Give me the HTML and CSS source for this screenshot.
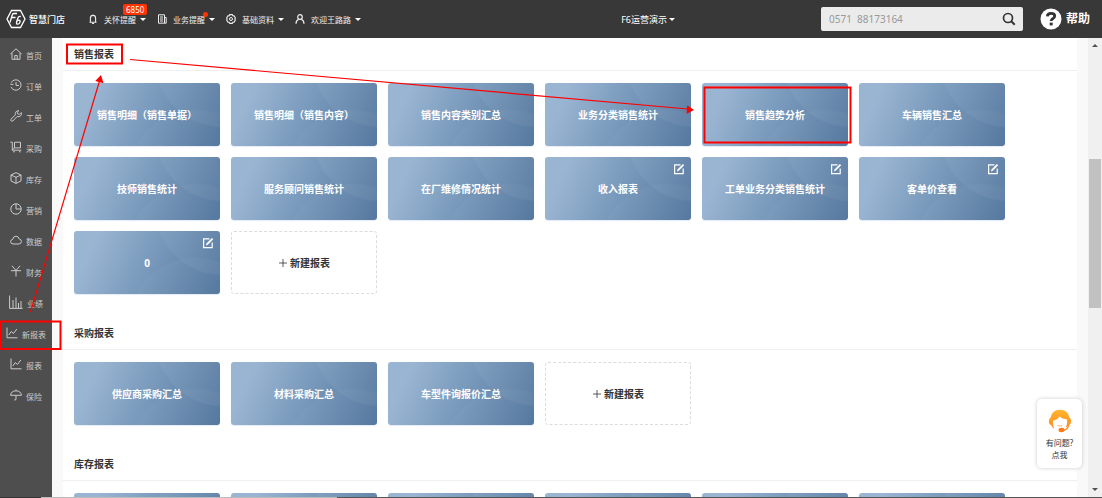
FILE: index.html
```html
<!DOCTYPE html>
<html lang="zh-CN">
<head>
<meta charset="utf-8">
<meta name="viewport" content="width=device-width, initial-scale=1">
<title>智慧门店</title>
<link rel="stylesheet" href="styles.css">
</head>
<body>
<svg class="sprite" aria-hidden="true">
  <symbol id="edit" viewBox="0 0 12 12"><path d="M7.500 1.800H1.600v8.900h8.600V5.500" fill="none" stroke="currentColor" stroke-width="1.200"/><path d="M4 8.400l.5-2L9.900.9l1.300 1.300-5.400 5.500z" fill="currentColor"/></symbol>
  <symbol id="plus" viewBox="0 0 10 10"><path d="M5 1v8M1 5h8" fill="none" stroke="currentColor" stroke-width=".8"/></symbol>
  <symbol id="chart" viewBox="0 0 12 12"><path d="M1 .5v10.300h10.500M2.800 8l2.400-3.400 2.300 1.800L10.800 2" fill="none" stroke="currentColor"/></symbol>
</svg>

<header class="topbar">
  <a class="brand" href="#">
    <svg class="brand-mark" viewBox="0 0 20 20"><path d="M5.500 1.500h9L19 10l-4.500 8.500h-9L1 10z" fill="none" stroke="#fff" stroke-width="1.300"/><path d="M11 4.500H7.800Q6.600 4.500 6.200 6L4 13.500M5.500 8.500h4M14.800 7.500q-2.300-.6-3 1.700L10.600 13q-.5 2.200 1.200 2.200 1.700 0 2.200-2 .5-2-1.200-2-1 0-1.800 1" fill="none" stroke="#fff" stroke-width="1.300"/></svg>
    <span>智慧门店</span>
  </a>
  <nav class="menu">
    <button class="menu-item" type="button">
      <svg class="menu-icon" viewBox="0 0 10 10"><path d="M1.500 8.200h7M2.400 8V4.200a2.600 2.800 0 0 1 5.200 0V8M5 .4v1M4 9.600h2" fill="none" stroke="currentColor" stroke-width="1.100"/></svg>
      <span>关怀提醒</span><i class="caret"></i><span class="count">6850</span>
    </button>
    <button class="menu-item" type="button">
      <svg class="menu-icon" viewBox="0 0 10 10"><path d="M1.500.8h6v8.400h-6zM7.500 3.500h1.700v5.700H7.500M3 3h3M3 5h3M3 7h3" fill="none" stroke="currentColor"/></svg>
      <span>业务提醒</span><i class="caret"></i><span class="dot"></span>
    </button>
    <button class="menu-item" type="button">
      <svg class="menu-icon" viewBox="0 0 10 10"><path d="M3.700.6h2.600l.5 1.200 1.300.1 1.300 2.100-.6 1 .6 1-1.300 2.100-1.300.1-.5 1.200H3.700l-.5-1.200-1.300-.1L.6 6l.6-1-.6-1 1.300-2.100 1.300-.1z" fill="none" stroke="currentColor" stroke-width="1.100"/><circle cx="5" cy="5" r="1.500" fill="none" stroke="currentColor"/></svg>
      <span>基础资料</span><i class="caret"></i>
    </button>
    <button class="menu-item" type="button">
      <svg class="menu-icon" viewBox="0 0 10 10"><circle cx="5" cy="3" r="2.300" fill="none" stroke="currentColor" stroke-width="1.200"/><path d="M1 9.800q0-3.600 2.800-4.600M9 9.800Q9 6.200 6.200 5.200" fill="none" stroke="currentColor" stroke-width="1.200"/></svg>
      <span>欢迎王路路</span><i class="caret"></i>
    </button>
  </nav>
  <button class="shop" type="button"><span>F6运营演示</span><i class="caret"></i></button>
  <form class="search">
    <input class="search-input" type="text" value="0571  88173164" aria-label="搜索">
    <button class="search-button" type="button" aria-label="搜索"><svg viewBox="0 0 14 14"><circle cx="6" cy="6" r="4.500" fill="none" stroke="#333" stroke-width="1.700"/><path d="M9.300 9.300l3.400 3.500" stroke="#333" stroke-width="2"/></svg></button>
  </form>
  <a class="help" href="#">
    <svg class="help-mark" viewBox="0 0 22 22"><circle cx="11" cy="11" r="10.500" fill="#fff"/><path d="M7.300 8.300q.3-3 3.800-3 3.600 0 3.600 2.700 0 1.500-1.700 2.500-1.800 1-1.800 2.500" fill="none" stroke="#333" stroke-width="2.800"/><path d="M9.700 14.600h3v2.800h-3z" fill="#333"/></svg>
    <span>帮助</span>
  </a>
</header>

<div class="shell">
  <nav class="sidebar">
    <a class="side-item" href="#"><svg class="side-icon" viewBox="0 0 12 12"><path d="M.4 6L6 .8 11.600 6M2 5v6.300h8V5M4.800 11V7.500h2.400V11" fill="none" stroke="currentColor"/></svg><span>首页</span></a>
    <a class="side-item" href="#"><svg class="side-icon" viewBox="0 0 12 12"><path d="M1.200 3.600A5.200 5.200 0 1 1 1 8M.4 5.300h3M6 3v3.400h3" fill="none" stroke="currentColor"/></svg><span>订单</span></a>
    <a class="side-item" href="#"><svg class="side-icon" viewBox="0 0 12 12"><path d="M8.800.8Q6.500.4 5.600 2.300 5 3.500 5.500 4.800L.9 9.300q-.5 1 .2 1.500.8.800 1.700.2l4.400-4.500q2 .7 3.500-.7 1.200-1.300.5-3.200L9.400 4.400 7.600 3.800 7.200 2.400z" fill="none" stroke="currentColor"/></svg><span>工单</span></a>
    <a class="side-item" href="#"><svg class="side-icon" viewBox="0 0 12 12"><path d="M.3 1.200h2v8h9M4.500 1.200h6v5.700h-6zM2.300 9.200l2-2.300" fill="none" stroke="currentColor"/><circle cx="4" cy="10.800" r=".8" fill="currentColor"/><circle cx="9.800" cy="10.800" r=".8" fill="currentColor"/></svg><span>采购</span></a>
    <a class="side-item" href="#"><svg class="side-icon" viewBox="0 0 12 12"><path d="M6 .7l5 2.200v6L6 11.400 1 8.900v-6zM1 3l5 2.300L11 3M6 5.300v6" fill="none" stroke="currentColor"/></svg><span>库存</span></a>
    <a class="side-item" href="#"><svg class="side-icon" viewBox="0 0 12 12"><circle cx="6" cy="6" r="5.200" fill="none" stroke="currentColor"/><path d="M6 .8V6h5.200" fill="none" stroke="currentColor"/></svg><span>营销</span></a>
    <a class="side-item" href="#"><svg class="side-icon" viewBox="0 0 12 12"><path d="M3 10Q.6 9.800.6 7.700q0-2 2.100-2.300Q3 2.200 6 2.200q2.600 0 3.200 2.800 2.200.3 2.200 2.500T9 10z" fill="none" stroke="currentColor"/></svg><span>数据</span></a>
    <a class="side-item" href="#"><svg class="side-icon" viewBox="0 0 12 12"><path d="M2 .8l4 4.700 4-4.700M6 5.500v6M1 5.700h10" fill="none" stroke="currentColor"/></svg><span>财务</span></a>
    <a class="side-item" href="#"><svg class="side-icon side-icon-wide" viewBox="0 0 14 14"><path d="M.6.5v12.900h13M4 13V5M7 13V2.500M9.500 13V8M12 13V6" fill="none" stroke="currentColor"/></svg><span>业绩</span></a>
    <a class="side-item" href="#"><svg class="side-icon"><use href="#chart"/></svg><span>新报表</span></a>
    <a class="side-item" href="#"><svg class="side-icon"><use href="#chart"/></svg><span>报表</span></a>
    <a class="side-item" href="#"><svg class="side-icon" viewBox="0 0 12 12"><path d="M.6 6.300Q1 2 6 1.800q5 .2 5.400 4.500zM6 .6v1.200M6 6.300V10q0 1.400-1.800 1" fill="none" stroke="currentColor"/></svg><span>保险</span></a>
  </nav>

  <main class="content">
    <section class="group">
      <h2 class="group-title">销售报表</h2>
      <div class="cards">
        <a class="card" href="#">销售明细（销售单据）</a>
        <a class="card" href="#">销售明细（销售内容）</a>
        <a class="card" href="#">销售内容类别汇总</a>
        <a class="card" href="#">业务分类销售统计</a>
        <a class="card" href="#">销售趋势分析</a>
        <a class="card" href="#">车辆销售汇总</a>
        <a class="card" href="#">技师销售统计</a>
        <a class="card" href="#">服务顾问销售统计</a>
        <a class="card" href="#">在厂维修情况统计</a>
        <a class="card" href="#">收入报表<svg class="edit"><use href="#edit"/></svg></a>
        <a class="card" href="#">工单业务分类销售统计<svg class="edit"><use href="#edit"/></svg></a>
        <a class="card" href="#">客单价查看<svg class="edit"><use href="#edit"/></svg></a>
        <a class="card" href="#">0<svg class="edit"><use href="#edit"/></svg></a>
        <button class="card-new" type="button"><svg class="plus"><use href="#plus"/></svg>新建报表</button>
      </div>
    </section>
    <section class="group">
      <h2 class="group-title">采购报表</h2>
      <div class="cards">
        <a class="card" href="#">供应商采购汇总</a>
        <a class="card" href="#">材料采购汇总</a>
        <a class="card" href="#">车型件询报价汇总</a>
        <button class="card-new" type="button"><svg class="plus"><use href="#plus"/></svg>新建报表</button>
      </div>
    </section>
    <section class="group">
      <h2 class="group-title">库存报表</h2>
      <div class="cards">
        <a class="card" href="#"></a><a class="card" href="#"></a><a class="card" href="#"></a>
        <a class="card" href="#"></a><a class="card" href="#"></a><a class="card" href="#"></a>
      </div>
    </section>
  </main>

  <div class="scrollbar">
    <i class="arrow-up"></i>
    <div class="track"><div class="thumb"></div></div>
    <i class="arrow-down"></i>
  </div>
</div>
<div class="edge"></div>

<a class="service" href="#">
  <svg class="service-icon" viewBox="0 0 24 24"><defs><linearGradient id="hair" x1="0" y1="0" x2="0" y2="1"><stop offset="0" stop-color="#ffb52e"/><stop offset="1" stop-color="#ff8a1f"/></linearGradient></defs><path d="M12 .8Q4 .8 2.600 8.500.8 9.500.8 12.500q0 3 2.700 4 1 2.300 2.800 3.300-2-4-1.300-8.300Q9.500 11 11.500 7.500q2.500 2.500 7.300 2.800 1 4.700-1.300 8.500 2.200-1 3-2.800 2.700-.8 2.700-3.500 0-3-1.800-4Q20 .8 12 .8z" fill="url(#hair)"/><path d="M21 15q-.8 5.500-6 6.500" fill="none" stroke="#ff8a1f" stroke-width="1.400"/><ellipse cx="13.500" cy="21" rx="3" ry="2.200" fill="#ff7a1a"/><path d="M9.300 16.500q2.500 1.300 5 0" fill="none" stroke="#ffb066"/></svg>
  <span>有问题?<br>点我</span>
</a>

<svg class="marks" viewBox="0 0 1102 498" aria-hidden="true">
  <g fill="none" stroke="#f00">
    <path d="M67 44.500h55v19H67zM704.500 87.500h146v55h-146zM1 321.500h59.500V349H1z" stroke-width="2"/>
    <path d="M130 59.500L688 109M30.500 312L99.500 81" stroke-width="1.200"/>
  </g>
  <path d="M694 110l-7.500 3.800.7-8.500zM101 75l2.500 8.300-8.300-2.300z" fill="#f00"/>
</svg>
</body>
</html>
```

FILE: styles.css
```css
* { box-sizing: border-box; }

body {
  margin: 0;
  height: 100vh;
  overflow: hidden;
  display: flex;
  flex-direction: column;
  background: #f9f9f9;
  color: #333;
  font-family: "Noto Sans", "Noto Sans CJK SC", sans-serif;
  font-size: 10px;
}

a { color: inherit; text-decoration: none; }
button { border: 0; padding: 0; background: none; color: inherit; font: inherit; }
svg { display: block; flex: none; }
.sprite { position: absolute; width: 0; height: 0; }

.topbar {
  display: flex;
  align-items: center;
  flex: none;
  height: 38px;
  padding: 0 12px 0 6px;
  background: #383838;
  color: #fff;
}
.brand { display: flex; align-items: center; gap: 3px; font-size: 9px; font-weight: 500; }
.brand-mark { width: 20px; height: 20px; }
.menu { display: flex; gap: 11px; margin-left: 23px; color: #eee; font-size: 8px; }
.menu-item { position: relative; display: flex; align-items: center; white-space: nowrap; }
.menu-icon { width: 10px; height: 10px; margin-right: 6px; }
.caret {
  margin-left: 4px;
  border: 3px solid transparent;
  border-top-color: #fff;
  border-bottom: 0;
}
.count {
  position: absolute;
  top: -10px;
  left: 35px;
  padding: 0 3px;
  border-radius: 2px;
  background: #ff3300;
  color: #fff;
  font-size: 8px;
  line-height: 11px;
}
.dot {
  position: absolute;
  top: -2px;
  left: 46px;
  width: 5px;
  height: 5px;
  border-radius: 50%;
  background: #ff3300;
}
.shop { display: flex; align-items: center; margin: 0 146px 0 auto; font-size: 9px; }
.shop .caret { margin-left: 2px; }
.search {
  display: flex;
  align-items: center;
  width: 202px;
  height: 24px;
  margin-right: 17px;
  padding: 0 7px 0 8px;
  border-radius: 2px;
  background: #ebebeb;
}
.search-input {
  flex: 1;
  min-width: 0;
  padding: 0;
  border: 0;
  outline: 0;
  background: none;
  color: #999;
  font: inherit;
}
.search-button svg { width: 14px; height: 14px; }
.help { display: flex; align-items: center; gap: 4px; font-size: 12px; font-weight: 700; line-height: 16px; }
.help-mark { width: 22px; height: 22px; }

.shell { flex: 1; min-height: 0; display: flex; }
.sidebar {
  flex: none;
  width: 52px;
  overflow: hidden;
  background: #4e4e4e;
  color: #ccc;
  font-size: 8px;
}
.side-item { display: flex; align-items: center; justify-content: center; gap: 4px; height: 31px; }
.side-item span { padding-top: 3px; }
.side-icon { width: 12px; height: 12px; }
.side-icon-wide { width: 14px; height: 14px; }

.content { flex: 1; min-width: 0; overflow: hidden; margin: 0 11px; background: #fff; }
.group { padding-bottom: 23px; }
.group-title {
  margin: 0;
  padding-left: 11px;
  border-bottom: 1px solid #efefef;
  font-size: 10px;
  line-height: 32px;
  font-weight: 700;
}
.cards {
  display: grid;
  grid-template-columns: repeat(auto-fill, 146px);
  grid-auto-rows: 63px;
  gap: 11px;
  padding: 12px 11px 0;
}
.card {
  position: relative;
  display: flex;
  align-items: center;
  justify-content: center;
  border-radius: 3px;
  background:
    radial-gradient(circle at 149px -24px, rgba(255, 255, 255, .05) 67px, transparent 69px),
    radial-gradient(circle at 122px 95px, rgba(255, 255, 255, .03) 67px, transparent 69px),
    linear-gradient(114deg, #9ab5d2 14%, #7899bb 52%, #50749c);
  box-shadow: 0 1px 1px rgba(130, 150, 200, .2);
  color: #fff;
  font-weight: 700;
}
.edit { position: absolute; top: 6px; right: 6px; width: 12px; height: 12px; }
.card-new {
  display: flex;
  align-items: center;
  justify-content: center;
  gap: 2px;
  border: 1px dashed #dcdcdc;
  border-radius: 3px;
  font-weight: 700;
}
.plus { width: 10px; height: 10px; }

.scrollbar {
  flex: none;
  display: flex;
  flex-direction: column;
  align-items: center;
  width: 14px;
  padding: 6px 0;
  background: #f0f0f0;
}
.arrow-up { border: 3px solid transparent; border-top: 0; border-bottom-color: #505050; }
.arrow-down { border: 3px solid transparent; border-bottom: 0; border-top-color: #505050; }
.track { flex: 1; width: 12px; padding-top: 112px; }
.thumb { height: 149px; background: #c1c1c1; }

.edge {
  flex: none;
  height: 1px;
  background: linear-gradient(90deg, #333 41px, #bbb 41px 337px, #555 337px);
}

.service {
  position: absolute;
  right: 20px;
  bottom: 30px;
  display: flex;
  flex-direction: column;
  align-items: center;
  gap: 4px;
  width: 45px;
  padding: 10px 0 7px;
  border-radius: 5px;
  background: #fff;
  box-shadow: 0 0 4px rgba(0, 0, 0, .2);
  font-size: 8px;
  line-height: 12px;
  text-align: center;
}
.service-icon { width: 24px; height: 24px; }

.marks { position: absolute; top: 0; left: 0; width: 1102px; height: 498px; pointer-events: none; }
```
